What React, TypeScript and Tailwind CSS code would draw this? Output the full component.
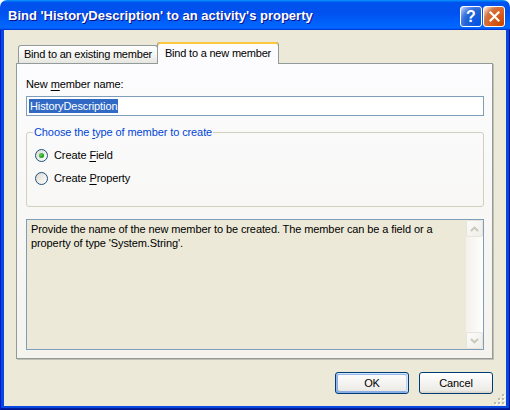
export default function App() {
  return (
    <div className="w-[510px] h-[410px] flex flex-col bg-white font-['Liberation_Sans',Arial,sans-serif] text-[11px] text-black">
      {/* Title bar */}
      <div className="h-[30px] shrink-0 flex items-center rounded-t-[7px] bg-[linear-gradient(180deg,#0997ff,#0053ee_8%,#0050ee_40%,#06f_88%,#06f_93%,#005bff_95%,#003dd7_96%,#003dd7)] pl-[8px] pr-[5px]">
        <span className="flex-1 text-white font-bold text-[13px] leading-[16px] mt-[1px] [text-shadow:1px_1px_#0f1089] whitespace-nowrap">
          Bind 'HistoryDescription' to an activity's property
        </span>
        <div className="flex gap-[1px] mt-[3px]">
          <button className="w-[22px] h-[21px] rounded-[3px] border border-white bg-[radial-gradient(circle_at_90%_90%,#0054e9_0%,#2263d5_55%,#4479e4_70%,#a3bbec_90%,#fff_100%)] flex items-center justify-center text-white font-bold text-[16px] leading-none">
            ?
          </button>
          <button className="w-[22px] h-[21px] rounded-[3px] border border-white bg-[radial-gradient(circle_at_90%_90%,#cc4600_0%,#dc6527_55%,#cd7546_70%,#ffccb2_90%,#fff_100%)] flex items-center justify-center">
            <svg width="11" height="11" viewBox="0 0 11 11">
              <path d="M1.5 1.5 L9.5 9.5 M9.5 1.5 L1.5 9.5" stroke="white" strokeWidth="2.2" strokeLinecap="square" />
            </svg>
          </button>
        </div>
      </div>

      {/* Frame */}
      <div className="flex-1 flex flex-col px-[4px] pb-[4px] bg-[#0846e0] shadow-[inset_1px_0_#0019cf,inset_-1px_0_#00138c,inset_0_-1px_#00138c,inset_0_-2px_#001ea0]">
        <div className="relative flex-1 flex flex-col bg-[#ECE9D8] pt-[12px] pl-[12px] pr-[13px] tracking-[-0.1px]">
          {/* Tabs */}
          <div className="flex items-end pl-[2px] h-[21px]">
            <div className="w-[140px] h-[18px] flex items-center justify-center border border-b-0 border-[#919B9C] rounded-t-[3px] bg-[linear-gradient(180deg,#fff,#f3f3ef_60%,#e6e5de)] whitespace-nowrap tracking-[-0.2px]">
              Bind to an existing member
            </div>
            <div className="relative z-10 -mb-[1px] -ml-[1px] w-[122px] h-[22px] flex items-center justify-center border-x border-[#919B9C] rounded-t-[3px] bg-[#FCFCFE] shadow-[inset_0_2px_#ffc83c,inset_0_1px_#e68b2c] whitespace-nowrap tracking-[-0.2px]">
              <span className="mt-[1px]">Bind to a new member</span>
            </div>
          </div>

          {/* Panel */}
          <div className="h-[296px] border border-[#919B9C] shadow-[1px_1px_0_#c3bfb0] bg-[linear-gradient(180deg,#fcfcfe,#f4f3ee)] pl-[9px] pr-[8px] pt-[14px] flex flex-col">
            <div className="leading-[13px]">
              New <span className="underline underline-offset-2">m</span>ember name:
            </div>
            <div className="mt-[5px] h-[20px] border border-[#7F9DB9] bg-white flex items-center px-[2px]">
              <span className="bg-[#316AC5] text-white leading-[14px] px-[1px]">HistoryDescription</span>
            </div>

            <fieldset className="mt-[10px] h-[81px] border border-[#D0D0BF] rounded-[3px] pl-[8px]">
              <legend className="-ml-[2px] px-[1px] text-[#0046D5] leading-[13px]">
                Choose the <span className="underline underline-offset-2">t</span>ype of member to create
              </legend>
              <div className="pt-[10px] flex flex-col gap-[10px]">
                <Radio checked label={<>Create <span className="underline underline-offset-2">F</span>ield</>} />
                <Radio label={<>Create <span className="underline underline-offset-2">P</span>roperty</>} />
              </div>
            </fieldset>

            <div className="mt-[12px] h-[131px] border border-[#7F9DB9] bg-[#ECE9D8] flex">
              <div className="flex-1 pl-[4px] pt-[2px] leading-[14px]">
                <div className="whitespace-nowrap">Provide the name of the new member to be created. The member can be a field or a</div>
                <div className="whitespace-nowrap">property of type 'System.String'.</div>
              </div>
              <div className="w-[17px] flex flex-col bg-[linear-gradient(90deg,#f3f1ec,#fefefb)]">
                <ScrollButton up />
                <div className="flex-1" />
                <ScrollButton />
              </div>
            </div>
          </div>

          {/* Buttons */}
          <div className="mt-[13px] flex justify-end gap-[10px]">
            <button className="w-[74px] h-[22px] rounded-[3px] border border-[#003C74] bg-[linear-gradient(180deg,#fff,#ecebe6_86%,#d6d0c5)] shadow-[inset_-1px_1px_#cee7ff,inset_1px_2px_#98b8ea,inset_-2px_2px_#bcd4f6,inset_1px_-1px_#89ade4,inset_2px_-2px_#89ade4]">
              OK
            </button>
            <button className="w-[74px] h-[22px] rounded-[3px] border border-[#003C74] bg-[linear-gradient(180deg,#fff,#ecebe6_86%,#d6d0c5)]">
              Cancel
            </button>
          </div>

          {/* Size grip */}
          <svg className="absolute right-[1px] bottom-[1px]" width="12" height="12" viewBox="0 0 12 12">
            {[
              [9, 1], [9, 5], [5, 5], [9, 9], [5, 9], [1, 9],
            ].map(([x, y], i) => (
              <g key={i}>
                <rect x={x + 1} y={y + 1} width="2" height="2" fill="#fff" />
                <rect x={x} y={y} width="2" height="2" fill="#bdb9aa" />
              </g>
            ))}
          </svg>
        </div>
      </div>
    </div>
  );
}

function Radio({ checked, label }: { checked?: boolean; label: React.ReactNode }) {
  return (
    <div className="flex items-center gap-[6px] h-[13px]">
      <div className="w-[13px] h-[13px] rounded-full border border-[#1C5180] bg-[linear-gradient(135deg,#dcd9cf,#fff)] flex items-center justify-center">
        {checked && <div className="w-[5px] h-[5px] rounded-full bg-[radial-gradient(circle_at_35%_35%,#55d551,#21a121_60%,#1a8a1a)]" />}
      </div>
      <span className="leading-[13px]">{label}</span>
    </div>
  );
}

function ScrollButton({ up }: { up?: boolean }) {
  return (
    <div className="h-[17px] rounded-[2px] border border-[#e6e4dc] bg-[linear-gradient(135deg,#fbfbf8,#efeee8)] flex items-center justify-center">
      <svg width="9" height="6" viewBox="0 0 9 6">
        <path d={up ? 'M1 5 L4.5 1.5 L8 5' : 'M1 1 L4.5 4.5 L8 1'} fill="none" stroke="#c9c7ba" strokeWidth="1.8" />
      </svg>
    </div>
  );
}
